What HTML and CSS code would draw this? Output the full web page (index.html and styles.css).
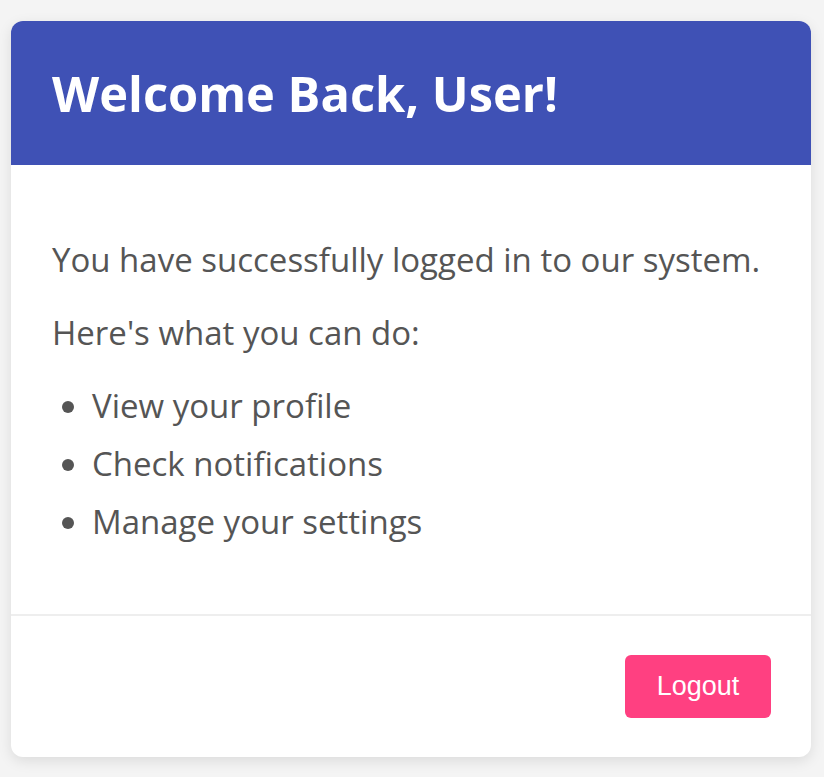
FILE: index.html
```html
<!DOCTYPE html>
<html>
<head>
<meta charset="utf-8">
<link rel="stylesheet" href="styles.css">
</head>
<body>
<div class="card">
  <div class="card-header">
    <h1 class="title">Welcome Back, User!</h1>
  </div>
  <div class="card-body">
    <p class="text">You have successfully logged in to our system.</p>
    <p class="text">Here's what you can do:</p>
    <ul class="list">
      <li class="item">View your profile</li>
      <li class="item">Check notifications</li>
      <li class="item">Manage your settings</li>
    </ul>
  </div>
  <div class="card-footer">
    <button class="logout">Logout</button>
  </div>
</div>
</body>
</html>
```

FILE: styles.css
```css
html, body {
  margin: 0;
  padding: 0;
}
body {
  background: #f4f4f4;
  font-family: "Open Sans", "Noto Sans", sans-serif;
  padding: 21px 13px 20px 11px;
}
.card {
  width: 800px;
  background: #ffffff;
  border-radius: 12px;
  overflow: hidden;
  box-shadow: 0 4px 14px rgba(0, 0, 0, 0.1);
}
.card-header {
  background: #3f51b5;
  height: 144px;
  padding: 0 41px;
  display: flex;
  align-items: center;
  box-sizing: border-box;
}
.title {
  margin: 0;
  color: #ffffff;
  font-size: 48.8px;
  font-weight: 700;
  line-height: 60px;
  letter-spacing: 0;
}
.card-body {
  padding: 71px 41px 67.5px;
  border-bottom: 2px solid #eeeeee;
  color: #555555;
}
.text {
  margin: 0 0 25px;
  font-size: 33px;
  line-height: 48px;
}
.list {
  margin: 0;
  padding-left: 40px;
}
.item {
  font-size: 33px;
  line-height: 48px;
  margin-bottom: 10px;
}
.item:last-child {
  margin-bottom: 0;
}
.card-footer {
  display: flex;
  justify-content: flex-end;
  padding: 39.5px 40px 39px;
}
.logout {
  width: 146px;
  height: 63px;
  border: none;
  border-radius: 6px;
  background: #ff4081;
  color: #ffffff;
  font-family: "Liberation Sans", Arial, sans-serif;
  font-size: 27px;
  padding: 0;
}
```
